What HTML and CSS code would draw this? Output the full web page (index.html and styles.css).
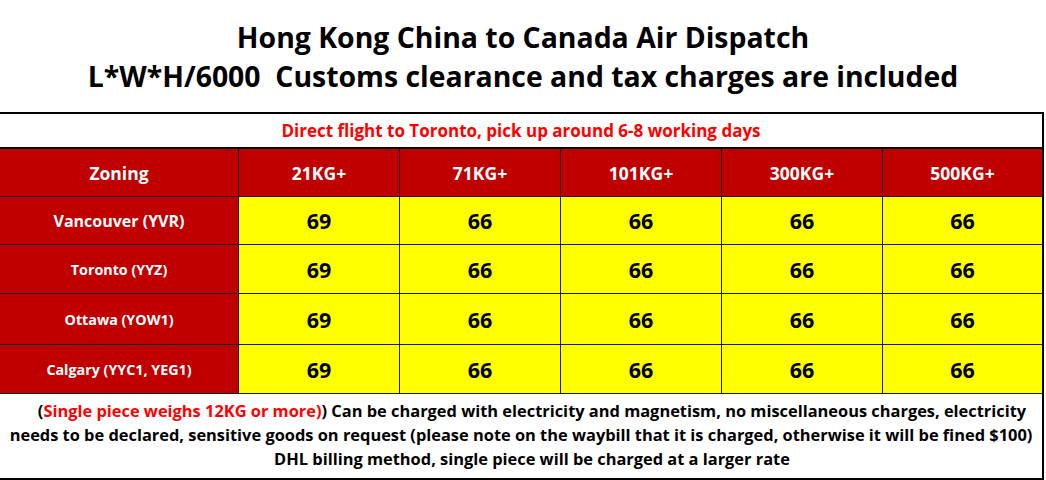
FILE: index.html
```html
<!DOCTYPE html>
<html>
<head>
<meta charset="utf-8">
<link rel="stylesheet" href="styles.css">
</head>
<body>
<div class="page">
  <div class="title">
    <div>Hong Kong China to Canada Air Dispatch</div>
    <div>L*W*H/6000&nbsp; Customs clearance and tax charges are included</div>
  </div>
  <div class="sheet">
    <div class="notice">Direct flight to Toronto, pick up around 6-8 working days</div>
    <div class="grid">
      <div class="cell head">Zoning</div>
      <div class="cell head">21KG+</div>
      <div class="cell head">71KG+</div>
      <div class="cell head">101KG+</div>
      <div class="cell head">300KG+</div>
      <div class="cell head last">500KG+</div>

      <div class="cell zone">Vancouver (YVR)</div>
      <div class="cell price">69</div>
      <div class="cell price">66</div>
      <div class="cell price">66</div>
      <div class="cell price">66</div>
      <div class="cell price last">66</div>

      <div class="cell zone small">Toronto (YYZ)</div>
      <div class="cell price">69</div>
      <div class="cell price">66</div>
      <div class="cell price">66</div>
      <div class="cell price">66</div>
      <div class="cell price last">66</div>

      <div class="cell zone small">Ottawa (YOW1)</div>
      <div class="cell price">69</div>
      <div class="cell price">66</div>
      <div class="cell price">66</div>
      <div class="cell price">66</div>
      <div class="cell price last">66</div>

      <div class="cell zone small">Calgary (YYC1, YEG1)</div>
      <div class="cell price">69</div>
      <div class="cell price">66</div>
      <div class="cell price">66</div>
      <div class="cell price">66</div>
      <div class="cell price last">66</div>
    </div>
    <div class="footer">
      <div class="shift">(<span class="red">Single piece weighs 12KG or more)</span>) Can be charged with electricity and magnetism, no miscellaneous charges, electricity</div>
      <div>needs to be declared, sensitive goods on request (please note on the waybill that it is charged, otherwise it will be fined $100)</div>
      <div class="shift">DHL billing method, single piece will be charged at a larger rate</div>
    </div>
  </div>
</div>
</body>
</html>
```

FILE: styles.css
```css
html, body {
  margin: 0;
  padding: 0;
  background: #ffffff;
}
.page {
  width: 1046px;
  height: 480px;
  font-family: "Open Sans", "Noto Sans", "Liberation Sans", sans-serif;
  font-weight: 700;
  color: #000;
  overflow: hidden;
}
.title {
  height: 112px;
  display: flex;
  flex-direction: column;
  justify-content: center;
  align-items: center;
  font-size: 28.4px;
  line-height: 39px;
  padding-top: 2px;
  box-sizing: border-box;
  white-space: nowrap;
}
.sheet {
  width: 1044px;
  border-top: 2px solid #000;
  border-right: 2px solid #000;
  border-bottom: 2px solid #000;
  box-sizing: border-box;
}
.notice {
  height: 35px;
  display: flex;
  align-items: center;
  justify-content: center;
  color: #ff0000;
  font-size: 17px;
  border-bottom: 2px solid #000;
  box-sizing: border-box;
}
.grid {
  display: grid;
  grid-template-columns: 239px 161px 161px 161px 161px 159px;
  grid-template-rows: 48px 48px 49px 51px 49px;
}
.cell {
  display: flex;
  align-items: center;
  justify-content: center;
  border-right: 1px solid #1a1a1a;
  border-bottom: 1px solid #1a1a1a;
  white-space: nowrap;
}
.cell.last { border-right: none; }
.head {
  background: #c00000;
  color: #ffffff;
  font-size: 17.5px;
}
.zone {
  background: #c00000;
  color: #ffffff;
  font-size: 16px;
}
.zone.small { font-size: 14.3px; }
.price {
  background: #ffff00;
  color: #000;
  font-size: 21.5px;
}
.footer {
  height: 84px;
  display: flex;
  flex-direction: column;
  justify-content: center;
  align-items: center;
  font-size: 16.4px;
  line-height: 24px;
  padding-bottom: 2px;
  box-sizing: border-box;
  white-space: nowrap;
}
.shift { padding-left: 22px; }
.red { color: #ff0000; }
```
